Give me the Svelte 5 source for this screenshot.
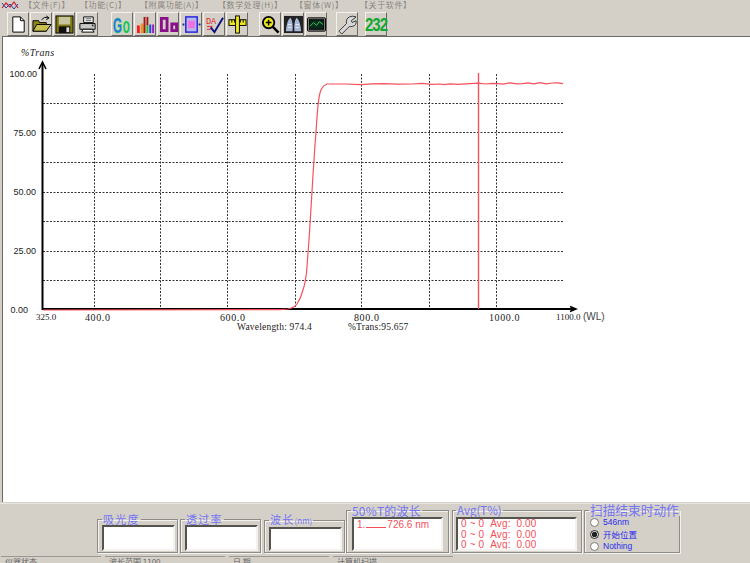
<script>
	const menus = [
		{ label: '【文件(F)】', width: 56 },
		{ label: '【功能(C)】', width: 60 },
		{ label: '【附属功能(A)】', width: 78 },
		{ label: '【数学处理(H)】', width: 77 },
		{ label: '【窗体(W)】', width: 65 },
		{ label: '【关于软件】', width: 60 }
	];

	const hLines = [103, 132, 162, 192, 221, 251, 280];
	const vLines = [94, 160, 227, 295, 361, 429, 496];
	const yLabels = [
		{ text: '100.00', x: 37, y: 77 },
		{ text: '75.00', x: 36, y: 136 },
		{ text: '50.00', x: 36, y: 195 },
		{ text: '25.00', x: 36, y: 254 },
		{ text: '0.00', x: 28, y: 313 }
	];
	const xLabels = [
		{ text: '400.0', x: 85 },
		{ text: '600.0', x: 220 },
		{ text: '800.0', x: 354 },
		{ text: '1000.0', x: 489 }
	];

	const curve = 'M43 310 L280 309.6 L288 309 Q294 308 297 304 Q301 298 303 290 Q305 284 306.500 273 L309 240 L311 208 L313 175 L315 145 L316.500 125 Q318 100 320 93 Q322 86 326 84.500 L327 84 L345 84 L361 84.6 L372 83.8 L383 83.6 L398 84.2 L412 84 L422 83.4 L432 84.4 L440 84 L444 84.6 L450 83.8 L458 84.4 L470 83.6 L478 83.2 L486 84 L492 83.4 L498 83.6 L503 84.2 L510 82.8 L517 83.8 L522 83.6 L528 82.8 L534 83.8 L540 82.6 L546 83.8 L552 83 L557 82.8 L563 83.6';
</script>

<div class="app">
	<div class="menu">
		<svg class="app-icon" width="18" height="11" viewBox="0 0 18 11">
			<path d="M1 8 L5 3 L9 7 L13 2 L17 8" fill="none" stroke="#d02030" stroke-width="1.2" />
			<path d="M1 3 L5 8 L9 4 L13 9 L17 4" fill="none" stroke="#3040b0" stroke-width="1" />
		</svg>
		{#each menus as m}
			<span class="menu-item" style="width: {m.width}px">{m.label}</span>
		{/each}
	</div>

	<div class="toolbar">
		<div class="group g-file">
			<button>
				<svg viewBox="0 0 20 20"><path d="M4 2 H12 L16 6 V18 H4 Z" fill="#fff" stroke="#000" /><path d="M12 2 V6 H16" fill="none" stroke="#000" /></svg>
			</button>
			<button>
				<svg viewBox="0 0 20 20"><path d="M1 6 H7 L8 8 H15 V17 H1 Z" fill="#8c8420" stroke="#000" /><path d="M1 17 L5 10 H20 L15 17 Z" fill="#c8c050" stroke="#000" /><path d="M10 5 Q13 1 17 3 M15 1 L18 3 L15 5" fill="none" stroke="#000" /></svg>
			</button>
			<button>
				<svg viewBox="0 0 20 20"><rect x="1" y="1" width="18" height="18" fill="#807a10" stroke="#000" /><rect x="4" y="2" width="12" height="8" fill="#c8c4a0" /><rect x="4" y="12" width="12" height="7" fill="#111" /><rect x="12" y="13" width="3" height="5" fill="#ddd" /></svg>
			</button>
			<button>
				<svg viewBox="0 0 20 20"><path d="M6 2 H16 V8 H6 Z" fill="#fff" stroke="#000" /><path d="M2 9 H18 V15 H2 Z" fill="#c8c8c8" stroke="#000" /><path d="M5 15 H15 L17 18 H4 Z" fill="#fff" stroke="#000" /><path d="M8 4 H14 M8 6 H14" stroke="#555" /><circle cx="15.500" cy="11" r="1" fill="#333" /></svg>
			</button>
		</div>

		<div class="group g-tools">
			<button>
				<svg viewBox="0 0 20 20"><text transform="translate(0 19) scale(0.72 1.4)" class="go"><tspan fill="#2a6cf0" stroke="#10d060" stroke-width="0.5">G</tspan><tspan fill="#10c850" dx="1">o</tspan></text></svg>
			</button>
			<button>
				<svg viewBox="0 0 20 20">
					<rect x="1" y="11" width="3" height="8" fill="#f02020" />
					<rect x="5" y="9" width="3" height="10" fill="#f09020" />
					<rect x="8" y="2" width="2" height="17" fill="#a01818" />
					<rect x="11" y="2" width="2" height="9" fill="#a01818" />
					<rect x="11" y="11" width="2" height="8" fill="#20c020" />
					<rect x="14" y="10" width="2" height="9" fill="#2040f0" />
					<rect x="17" y="10" width="2" height="9" fill="#9020c0" />
				</svg>
			</button>
			<button>
				<svg viewBox="0 0 20 20"><path d="M1 2 H10 V18 H1 Z M4 5 V15 H7 V5 Z M12 8 H20 V18 H12 Z M15 11 V15 H17 V11 Z" fill="#8a108a" fill-rule="evenodd" /></svg>
			</button>
			<button>
				<svg viewBox="0 0 20 20"><rect x="4" y="2" width="12" height="16" fill="#b8b8f0" stroke="#2020e0" stroke-width="1.500" /><rect x="6.500" y="6" width="7" height="8" fill="#f070e0" /><rect x="0.500" y="9" width="2" height="2" fill="#2020a0" /><rect x="17.500" y="9" width="2" height="2" fill="#2020a0" /></svg>
			</button>
			<button>
				<svg viewBox="0 0 20 20"><text x="1" y="9" class="da">DA</text><path d="M2 12 H8 M2 15 H6" stroke="#e02020" /><path d="M6 13 L10 18 L19 3" fill="none" stroke="#101080" stroke-width="2" /></svg>
			</button>
			<button>
				<svg viewBox="0 0 20 20"><rect x="1" y="5" width="18" height="6" fill="#f0e820" stroke="#000" /><path d="M4 5 V8 M7 5 V8 M10 5 V8 M13 5 V8 M16 5 V8" stroke="#000" /><rect x="8" y="1" width="4" height="18" fill="#f0e820" stroke="#000" /></svg>
			</button>
		</div>

		<div class="group g-view">
			<button>
				<svg viewBox="0 0 20 20"><circle cx="8" cy="8" r="6" fill="#f0e820" stroke="#000" stroke-width="2" /><path d="M5 8 H11 M8 5 V11" stroke="#000" stroke-width="1.600" /><path d="M12.500 12.500 L18.500 18.500" stroke="#000" stroke-width="2.600" /></svg>
			</button>
			<button>
				<svg viewBox="0 0 20 20"><rect x="0" y="1" width="20" height="18" fill="#222" /><path d="M2 17 Q3 5 7 3 Q10 9 9 17 Z M18 17 Q17 5 13 3 Q10 9 11 17 Z" fill="#a8b8d8" /><path d="M4 10 H8 M12 10 H16 M4 13 H8 M12 13 H16" stroke="#e8e8f0" /></svg>
			</button>
			<button>
				<svg viewBox="0 0 20 20"><rect x="0.500" y="3" width="19" height="14" rx="1" fill="#888" stroke="#000" /><rect x="2.500" y="5" width="15" height="10" fill="#0a2a1a" stroke="#000" /><path d="M3 12 L7 8 L10 11 L13 7 L17 10" fill="none" stroke="#30d060" /></svg>
			</button>
		</div>

		<div class="group g-wrench">
			<button>
				<svg viewBox="0 0 20 20"><path d="M1 17 L9 9 Q8 4 12 2 Q15 0.500 19 2 L14 6 L15 8 L19 6 Q20 11 15 12 Q13 12.500 12 12 L4 20 Z" fill="#d8d8d8" stroke="#333" /></svg>
			</button>
		</div>

		<div class="group g-com">
			<button><span class="com">232</span></button>
		</div>
	</div>

	<div class="canvas">
		<svg class="chart" width="750" height="466" viewBox="0 36 750 466">
			<!-- grid -->
			{#each hLines as y}
				<line x1="43" x2="563" y1={y + 0.5} y2={y + 0.5} class="grid" />
			{/each}
			{#each vLines as x}
				<line x1={x + 0.5} x2={x + 0.5} y1="74" y2="309" class="grid" />
			{/each}

			<!-- axes -->
			<path d="M42.500 63 V310" class="axis" />
			<path d="M39 69 L42.500 62 L46 69" class="axis thin" />
			<path d="M42 309 H575" class="axis" />
			<path d="M570 306.500 L576 309 L570 311.500" class="axis thin" />

			<!-- trace and cursor -->
			<path d={curve} class="trace" />
			<line x1="478.500" x2="478.500" y1="73" y2="309" class="cursor" />

			<!-- labels -->
			<text x="21" y="56" class="title">%Trans</text>
			{#each yLabels as l}
				<text x={l.x} y={l.y} text-anchor="end" class="ylabel">{l.text}</text>
			{/each}
			<text x="36" y="320" class="small">325.0</text>
			{#each xLabels as l}
				<text x={l.x} y="321" class="xlabel">{l.text}</text>
			{/each}
			<text x="556" y="320" class="small">1100.0</text>
			<text x="583" y="320" class="wl">(WL)</text>
			<text x="237" y="330" class="readout">Wavelength: 974.4</text>
			<text x="348" y="330" class="readout">%Trans:95.657</text>
		</svg>
	</div>

	<div class="panel">
		<fieldset class="box low b1">
			<legend>吸光度</legend>
			<div class="field"></div>
		</fieldset>
		<fieldset class="box low b2">
			<legend>透过率</legend>
			<div class="field"></div>
		</fieldset>
		<fieldset class="box low b3">
			<legend>波长<small>(nm)</small></legend>
			<div class="field"></div>
		</fieldset>
		<fieldset class="box high b4">
			<legend>50%T的波长</legend>
			<div class="field readings">
				<div>1.<u class="blank"></u>726.6 nm</div>
			</div>
		</fieldset>
		<fieldset class="box high b5">
			<legend>Avg(T%)</legend>
			<div class="field readings avg">
				<div>0 ~ 0 &nbsp;Avg: &nbsp;0.00</div>
				<div>0 ~ 0 &nbsp;Avg: &nbsp;0.00</div>
				<div>0 ~ 0 &nbsp;Avg: &nbsp;0.00</div>
			</div>
		</fieldset>
		<fieldset class="box high b6">
			<legend>扫描结束时动作</legend>
			<label><input type="radio" name="end" />546nm</label>
			<label><input type="radio" name="end" checked />开始位置</label>
			<label><input type="radio" name="end" />Nothing</label>
		</fieldset>
	</div>

	<div class="status">
		<span class="cell c1">仪器状态</span>
		<span class="cell c2">波长范围 1100</span>
		<span class="cell c3">日 期</span>
		<span class="cell c4">计算机扫描</span>
	</div>
</div>

<style>
	:global(body) {
		margin: 0;
		background: #d4d0c8;
	}

	.app {
		width: 750px;
		height: 563px;
		display: flex;
		flex-direction: column;
		overflow: hidden;
		background: #d4d0c8;
		font-family: "Liberation Sans", "Noto Sans CJK SC", sans-serif;
	}

	.menu {
		height: 12px;
		flex: none;
		display: flex;
		align-items: flex-start;
		font-family: "Noto Sans CJK SC", sans-serif;
		font-size: 8px;
		line-height: 10px;
		color: #8a8680;
		white-space: nowrap;
		overflow: hidden;
	}

	.app-icon {
		width: 18px;
		margin: 0 5px 0 1px;
		flex: none;
	}

	.menu-item {
		flex: none;
		letter-spacing: 0.6px;
	}

	.toolbar {
		height: 24px;
		flex: none;
		display: flex;
		padding-left: 7px;
	}

	.group {
		display: flex;
		gap: 1px;
	}

	.g-tools {
		margin-left: 13px;
	}

	.g-view {
		margin-left: 11px;
	}

	.g-wrench {
		margin-left: 9px;
	}

	.g-com {
		margin-left: 7px;
	}

	button {
		width: 22px;
		height: 24px;
		padding: 2px 1px;
		display: flex;
		align-items: center;
		justify-content: center;
		background: #d4d0c8;
		border: 1px solid;
		border-color: #f4f2ee #6c6a64 #6c6a64 #f4f2ee;
		box-sizing: border-box;
	}

	button svg {
		width: 19px;
		height: 19px;
		display: block;
		overflow: visible;
	}

	.go {
		font-family: "Liberation Sans", sans-serif;
		font-weight: bold;
		font-size: 17px;
	}

	.da {
		font-family: "Liberation Mono", monospace;
		font-size: 9px;
		fill: #e02020;
	}

	.com {
		font-family: "Liberation Sans", sans-serif;
		font-weight: bold;
		font-size: 15px;
		letter-spacing: -1px;
		color: #10a830;
		transform: scaleY(1.25);
	}

	.canvas {
		height: 466px;
		flex: none;
		margin-left: 2px;
		background: #fff;
		border-left: 1px solid #6c6a64;
		border-top: 1px solid #6c6a64;
		box-sizing: border-box;
		overflow: hidden;
	}

	.chart {
		display: block;
		margin: -1px 0 0 -3px;
	}

	.grid {
		stroke: #333;
		stroke-width: 1;
		stroke-dasharray: 2 1.500;
	}

	.axis {
		fill: none;
		stroke: #000;
		stroke-width: 2;
	}

	.thin {
		stroke-width: 1.500;
	}

	.trace {
		fill: none;
		stroke: #f8505c;
		stroke-width: 1.200;
	}

	.cursor {
		stroke: #f8505c;
		stroke-width: 1.400;
	}

	text {
		fill: #222;
	}

	.title {
		font: italic 10px "Liberation Serif", serif;
		letter-spacing: 0.4px;
	}

	.ylabel {
		font: 9px "Liberation Sans", sans-serif;
	}

	.small {
		font: 9px "Liberation Serif", serif;
	}

	.xlabel {
		font: 10px "Liberation Serif", serif;
		letter-spacing: 0.6px;
	}

	.wl {
		font: 10px "Liberation Sans", sans-serif;
		fill: #444;
	}

	.readout {
		font: 9.500px "Liberation Serif", serif;
		letter-spacing: 0.2px;
	}

	.panel {
		height: 53px;
		flex: none;
		display: flex;
		align-items: flex-end;
		padding-left: 97px;
		box-sizing: border-box;
		border-top: 1px solid #e8e6e0;
		margin-top: 1px;
	}

	.box {
		margin: 0 0 3px;
		padding: 0 2px 1px 4px;
		min-width: 0;
		box-sizing: border-box;
		border: 1px solid #8e8c86;
		box-shadow: inset 1px 1px 0 #f4f2ee, 1px 1px 0 #f4f2ee;
		display: flex;
		flex-direction: column;
	}

	.low {
		height: 40px;
	}

	.high {
		height: 49px;
	}

	.b1 { width: 81px; margin-right: 2px; }
	.b2 { width: 81px; margin-right: 3px; }
	.b3 { width: 81px; margin-right: 1px; }
	.b4 { width: 103px; margin-right: 3px; padding: 0 5px 1px; }
	.b5 { width: 130px; margin-right: 2px; padding: 0 4px 1px 3px; }
	.b6 { width: 96px; padding: 0 2px 0 5px; }

	legend {
		padding: 0 1px;
		margin-left: 0;
		font-family: "Noto Sans CJK SC", sans-serif;
		font-size: 11px;
		line-height: 12px;
		color: #7474f4;
		white-space: nowrap;
		letter-spacing: 1.300px;
	}

	legend small {
		font-size: 8px;
		letter-spacing: 0;
	}

	.b4 legend {
		margin-left: -1px;
		font-size: 12px;
		line-height: 13px;
		letter-spacing: 0.2px;
	}

	.b5 legend {
		margin-left: 0;
		font-size: 11.500px;
		line-height: 13px;
		letter-spacing: 0;
	}

	.b6 legend {
		font-size: 12.700px;
		line-height: 12px;
		letter-spacing: 0;
		margin-left: -1px;
	}

	.field {
		flex: 1;
		background: #fff;
		border: 2px solid;
		border-color: #55534e #f4f2ee #f4f2ee #55534e;
		box-sizing: border-box;
	}

	.readings {
		padding: 0 3px;
		font-size: 10px;
		line-height: 11px;
		color: #f4505a;
		white-space: nowrap;
		overflow: hidden;
	}

	.avg {
		line-height: 10.500px;
		letter-spacing: 0.15px;
	}

	.blank {
		display: inline-block;
		width: 20px;
		margin: 0 1px;
		height: 8px;
		border-bottom: 1px solid #f4505a;
	}

	label {
		display: flex;
		align-items: center;
		height: 12px;
		font-size: 8.500px;
		color: #2a2af0;
		white-space: nowrap;
	}

	input[type="radio"] {
		width: 9px;
		height: 9px;
		margin: 0 4px 0 0;
		flex: none;
		accent-color: #222;
	}

	.status {
		flex: 1;
		display: flex;
		gap: 4px;
		padding-left: 1px;
		overflow: hidden;
		font-family: "Noto Sans CJK SC", sans-serif;
		font-size: 8px;
		line-height: 10px;
		color: #666;
	}

	.cell {
		border-top: 1px solid #9a9890;
		padding-left: 4px;
		box-sizing: border-box;
		white-space: nowrap;
	}

	.c1 { width: 100px; }
	.c2 { width: 120px; }
	.c3 { width: 100px; }
	.c4 { width: 120px; }
</style>
